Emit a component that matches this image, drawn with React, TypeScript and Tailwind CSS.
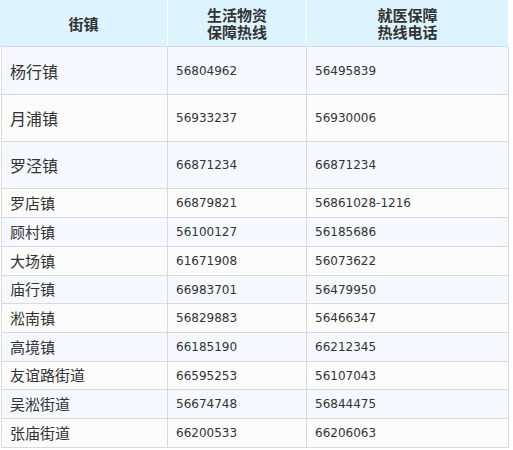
import React from "react";

type Row = { name: string; a: string; b: string; h: string; big?: boolean };

const rows: Row[] = [
  { name: "杨行镇", a: "56804962", b: "56495839", h: "h-[48px]", big: true },
  { name: "月浦镇", a: "56933237", b: "56930006", h: "h-[47px]", big: true },
  { name: "罗泾镇", a: "66871234", b: "66871234", h: "h-[47px]", big: true },
  { name: "罗店镇", a: "66879821", b: "56861028-1216", h: "h-[29px]" },
  { name: "顾村镇", a: "56100127", b: "56185686", h: "h-[29px]" },
  { name: "大场镇", a: "61671908", b: "56073622", h: "h-[29px]" },
  { name: "庙行镇", a: "66983701", b: "56479950", h: "h-[28px]" },
  { name: "淞南镇", a: "56829883", b: "56466347", h: "h-[29px]" },
  { name: "高境镇", a: "66185190", b: "66212345", h: "h-[29px]" },
  { name: "友谊路街道", a: "66595253", b: "56107043", h: "h-[28px]" },
  { name: "吴淞街道", a: "56674748", b: "56844475", h: "h-[29px]" },
  { name: "张庙街道", a: "66200533", b: "66206063", h: "h-[29px]" },
];

const cjk = "font-['Noto_Sans_CJK_SC','Noto_Sans',sans-serif]";
const num = "font-['DejaVu_Sans','Noto_Sans_CJK_SC',sans-serif]";

export default function App() {
  return (
    <div className="w-[513px] h-[450px] bg-white text-[#333]">
      <div className="flex h-[47px] w-[508px] bg-[#ddf3fe] border-b border-[#d8dde0] font-bold text-[15px] leading-[17px]">
        <div className={`w-[168px] border-r border-white flex items-center justify-center ${cjk}`}>街镇</div>
        <div className={`w-[139px] border-r border-white flex flex-col items-center justify-center text-center ${cjk}`}>
          <span>生活物资</span>
          <span>保障热线</span>
        </div>
        <div className={`flex-1 flex flex-col items-center justify-center text-center ${cjk}`}>
          <span>就医保障</span>
          <span>热线电话</span>
        </div>
      </div>
      {rows.map((r, i) => (
        <div
          key={r.name}
          className={`ml-px flex w-[508px] ${r.h} border-l border-r border-b border-[#dadada] ${i % 2 === 0 ? "bg-[#f5f9ff]" : "bg-[#fcfcfc]"}`}
        >
          <div className={`w-[166px] border-r border-[#dadada] flex items-center pl-[8px] ${cjk} ${r.big ? "text-[16px]" : "text-[15px]"}`}>
            {r.name}
          </div>
          <div className={`w-[139px] border-r border-[#dadada] flex items-center pl-[8px] text-[12px] ${num}`}>{r.a}</div>
          <div className={`flex-1 flex items-center pl-[8px] text-[12px] ${num}`}>{r.b}</div>
        </div>
      ))}
    </div>
  );
}
